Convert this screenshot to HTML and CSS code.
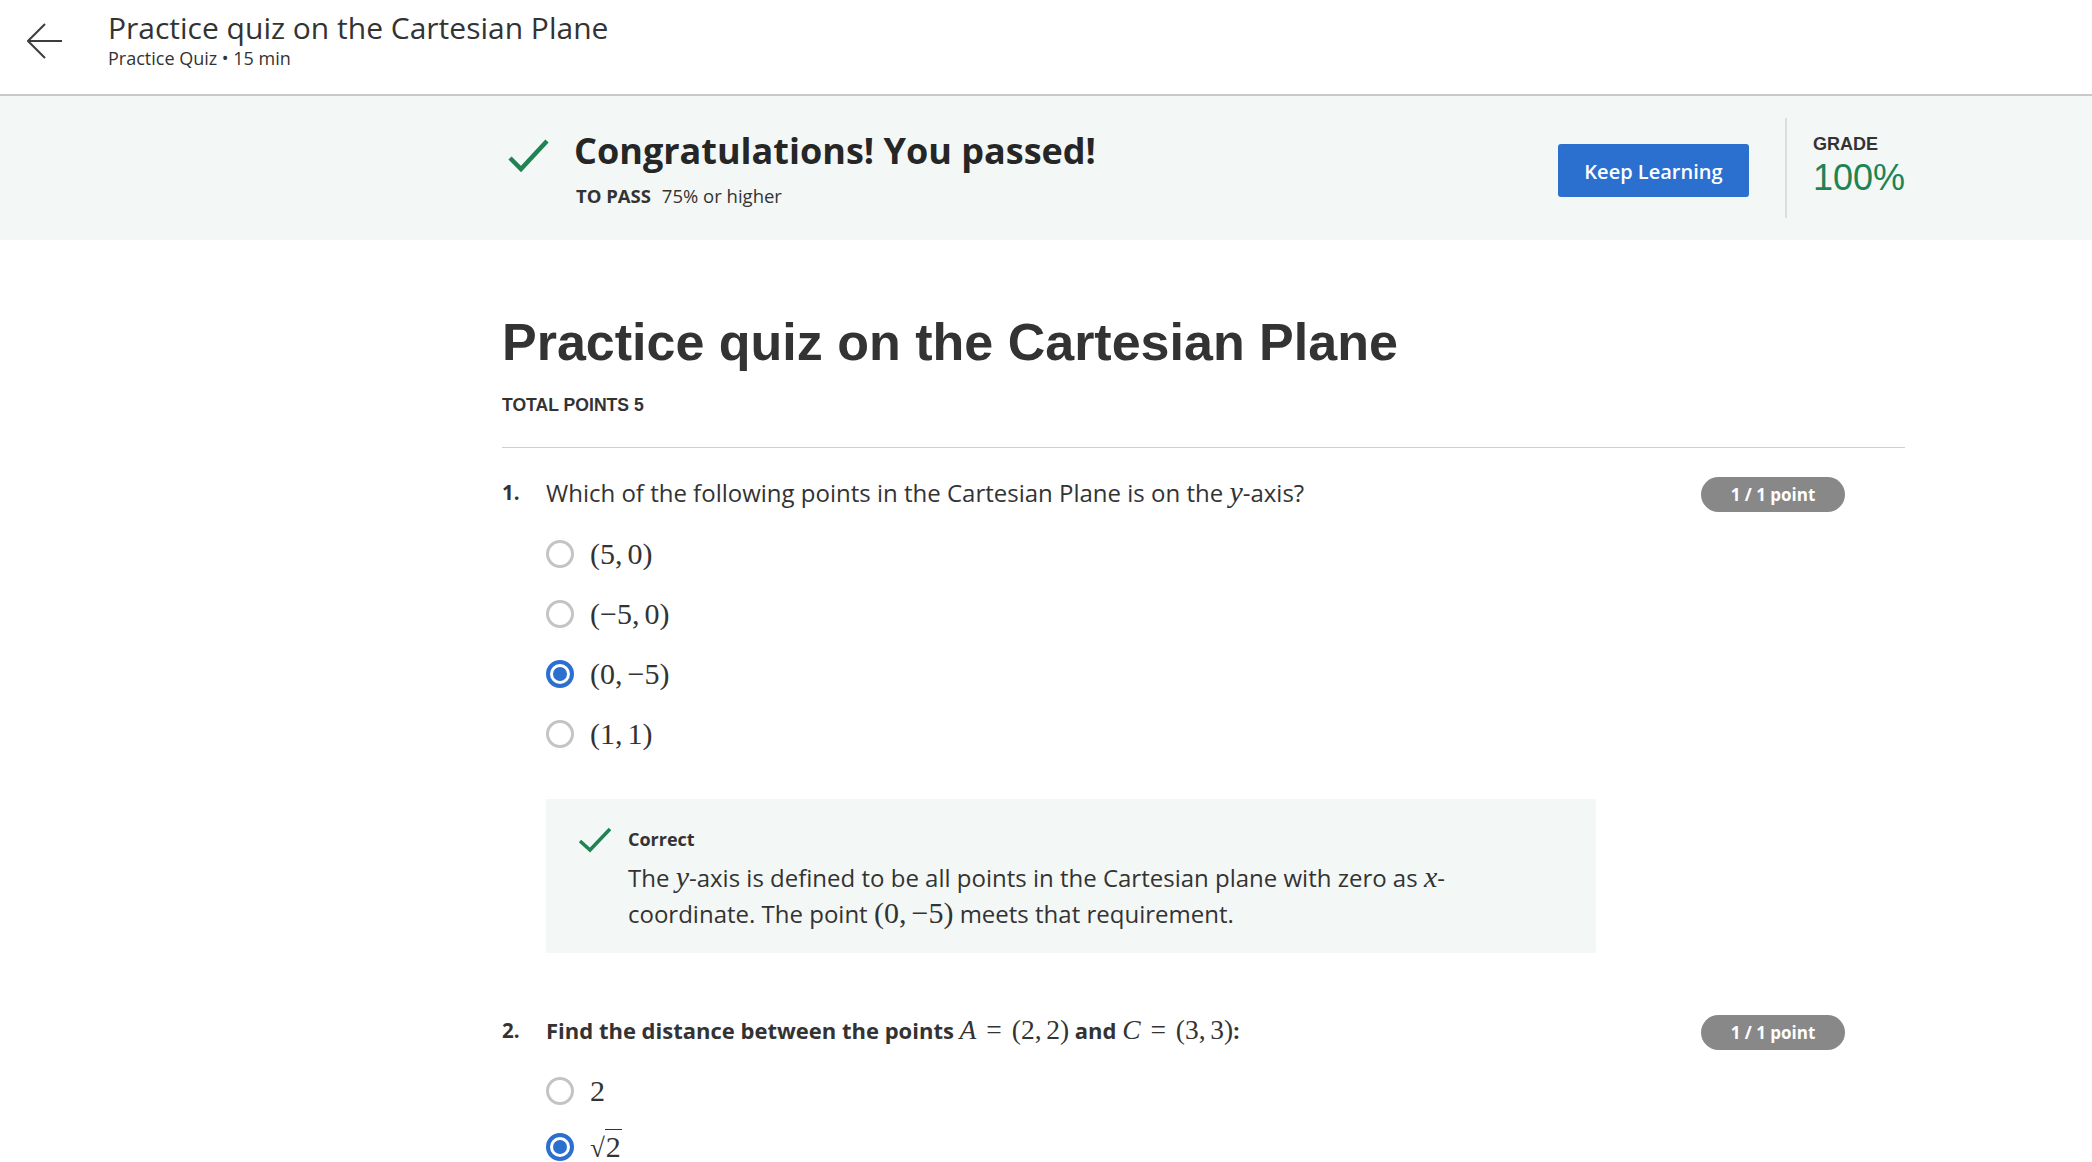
FILE: index.html
```html
<!DOCTYPE html>
<html lang="en">
<head>
<meta charset="utf-8">
<title>Practice quiz on the Cartesian Plane</title>
<link rel="stylesheet" href="styles.css">
</head>
<body>
<header class="topbar">
  <svg class="back" width="36" height="36" viewBox="0 0 36 36" aria-hidden="true">
    <polyline points="18,1 1,18 18,35" fill="none" stroke="#3d3d3d" stroke-width="2"/>
    <line x1="1" y1="18" x2="35" y2="18" stroke="#3d3d3d" stroke-width="2"/>
  </svg>
  <div class="topbar-text">
    <div class="topbar-title">Practice quiz on the Cartesian Plane</div>
    <div class="topbar-sub">Practice Quiz • 15 min</div>
  </div>
</header>

<section class="banner">
  <div class="banner-inner">
    <div class="banner-left">
      <svg class="pass-check" width="44" height="36" viewBox="0 0 44 36" aria-hidden="true">
        <polyline points="4,21 15,32 41,4" fill="none" stroke="#1f8354" stroke-width="4.5"/>
      </svg>
      <div>
        <div class="congrats">Congratulations! You passed!</div>
        <div class="topass"><span class="topass-label">TO PASS</span> 75% or higher</div>
      </div>
    </div>
    <div class="banner-right">
      <button class="keep">Keep Learning</button>
      <div class="vdivider"></div>
      <div class="grade">
        <div class="grade-label">GRADE</div>
        <div class="grade-value">100%</div>
      </div>
    </div>
  </div>
</section>

<main class="content">
  <h1 class="quiz-title">Practice quiz on the Cartesian Plane</h1>
  <div class="total">TOTAL POINTS 5</div>
  <hr class="rule">

  <div class="question">
    <div class="q-head">
      <div class="q-num">1.</div>
      <div class="q-text">Which of the following points in the Cartesian Plane is on the <span class="mi">y</span>-axis?</div>
      <div class="badge">1 / 1 point</div>
    </div>
    <div class="options">
      <div class="option"><span class="radio"></span><span class="m">(5,<span class="thin"></span>0)</span></div>
      <div class="option"><span class="radio"></span><span class="m">(−5,<span class="thin"></span>0)</span></div>
      <div class="option"><span class="radio selected"></span><span class="m">(0,<span class="thin"></span>−5)</span></div>
      <div class="option"><span class="radio"></span><span class="m">(1,<span class="thin"></span>1)</span></div>
    </div>
    <div class="feedback">
      <svg class="fb-check" width="34" height="26" viewBox="0 0 34 26" aria-hidden="true">
        <polyline points="2,14 12,23 32,2" fill="none" stroke="#1f8354" stroke-width="3.5"/>
      </svg>
      <div class="fb-body">
        <div class="fb-title">Correct</div>
        <div class="fb-text">The <span class="mi">y</span>-axis is defined to be all points in the Cartesian plane with zero as <span class="mi">x</span>-<br>coordinate. The point <span class="m">(0,<span class="thin"></span>−5)</span> meets that requirement.</div>
      </div>
    </div>
  </div>

  <div class="question q2">
    <div class="q-head">
      <div class="q-num">2.</div>
      <div class="q-text bold">Find the distance between the points <span class="mi">A</span><span class="m"><span class="rel">=</span>(2,<span class="thin"></span>2)</span> and <span class="mi">C</span><span class="m"><span class="rel">=</span>(3,<span class="thin"></span>3)</span>:</div>
      <div class="badge">1 / 1 point</div>
    </div>
    <div class="options">
      <div class="option"><span class="radio"></span><span class="m">2</span></div>
      <div class="option"><span class="radio selected"></span><span class="m"><span class="sqrt">√</span><span class="rad">2</span></span></div>
    </div>
  </div>
</main>
</body>
</html>
```

FILE: styles.css
```css
* { box-sizing: border-box; }
html, body { margin: 0; padding: 0; }
body {
  font-family: "Open Sans", "Liberation Sans", sans-serif;
  color: #333;
  background: #fff;
}

.topbar {
  height: 96px;
  display: flex;
  align-items: flex-start;
  padding-left: 27px;
  border-bottom: 2px solid #c6c9c8;
}
.back { margin-top: 23px; flex: none; }
.topbar-text { margin-left: 45px; padding-top: 10px; }
.topbar-title { font-size: 30px; line-height: 36px; color: #333; }
.topbar-sub { font-size: 18px; line-height: 24px; margin-top: 0; color: #333; }

.banner { background: #f3f8f6; height: 144px; }
.banner-inner {
  margin-left: 502px;
  width: 1403px;
  height: 144px;
  display: flex;
  justify-content: space-between;
}
.banner-left { display: flex; align-items: flex-start; padding-top: 33px; }
.pass-check { margin-top: 8px; margin-left: 4px; margin-right: 24px; flex: none; }
.congrats { font-size: 36px; line-height: 44px; font-weight: 700; color: #262626; }
.topass { font-size: 18.5px; line-height: 24px; margin-top: 11px; margin-left: 2px; color: #333; }
.topass-label { font-weight: 700; margin-right: 6px; }

.banner-right { display: flex; align-items: center; }
.keep {
  width: 191px;
  height: 53px;
  margin-top: 5px;
  background: #2b6fcf;
  color: #fff;
  border: none;
  border-radius: 3px;
  font-family: "Open Sans", sans-serif;
  font-size: 20px;
  font-weight: 600;
  padding: 0;
  line-height: 55px;
}
.vdivider { width: 2px; height: 100px; background: #dcdedd; margin-left: 36px; margin-right: 26px; }
.grade { padding-bottom: 4px; font-family: "Liberation Sans", Arial, sans-serif; }
.grade-label { font-size: 18px; line-height: 20px; font-weight: 700; color: #333; }
.grade-value { font-size: 36px; line-height: 40px; margin-top: 4px; color: #1f8354; }

.content { margin-left: 502px; width: 1403px; }
.quiz-title {
  margin: 72px 0 0;
  font-family: "Liberation Sans", Arial, sans-serif;
  font-size: 52px;
  line-height: 60px;
  font-weight: 700;
  color: #333;
}
.total {
  margin-top: 22px;
  font-family: "Liberation Sans", Arial, sans-serif;
  font-size: 17.6px;
  line-height: 22px;
  font-weight: 700;
  color: #333;
}
.rule { margin: 31px 0 0; border: none; border-top: 1px solid #cfcfcf; height: 0; }

.question { margin-top: 29px; }
.q2 { margin-top: 62px; }
.q-head { display: flex; align-items: flex-start; }
.q-num { width: 44px; flex: none; font-size: 20.5px; font-weight: 700; line-height: 30px; }
.q-text { flex: 1; font-size: 24px; line-height: 30px; color: #333; }
.q-text.bold { font-weight: 700; font-size: 22px; }
.badge {
  flex: none;
  width: 144px;
  height: 35px;
  margin-right: 60px;
  border-radius: 18px;
  background: #888;
  color: #fff;
  font-size: 17px;
  font-weight: 700;
  display: flex;
  align-items: center;
  justify-content: center;
}

.options { margin-top: 12px; margin-left: 44px; }
.option { height: 60px; display: flex; align-items: center; }
.q2 .options { margin-top: 13px; }
.q2 .option { height: 56px; }
.radio {
  width: 28px;
  height: 28px;
  border-radius: 50%;
  border: 3px solid #c4c4c4;
  margin-right: 16px;
  flex: none;
  display: flex;
  align-items: center;
  justify-content: center;
}
.radio.selected { border: 4px solid #2b6fcf; }
.radio.selected::after {
  content: "";
  width: 14px;
  height: 14px;
  border-radius: 50%;
  background: #2b6fcf;
}

.m { font-family: "Liberation Serif", "Times New Roman", serif; font-size: 30px; font-weight: 400; line-height: 1; }
.q-text .m, .fb-text .m { font-size: 1.25em; }
.thin { display: inline-block; width: 0.17em; }
.rel { display: inline-block; padding: 0 0.36em; }
.mi { font-family: "Liberation Serif", "Times New Roman", serif; font-style: italic; font-size: 1.25em; font-weight: 400; }
.sqrt { font-size: 0.9em; }
.rad { border-top: 1.5px solid #333; padding: 0 1px; }

.feedback {
  margin-top: 35px;
  margin-left: 44px;
  width: 1050px;
  height: 154px;
  background: #f3f8f6;
  display: flex;
  align-items: flex-start;
  padding: 28px 0 0 32px;
}
.fb-check { flex: none; margin-top: 0; margin-right: 16px; }
.fb-title { font-size: 18px; line-height: 24px; font-weight: 700; color: #333; }
.fb-text { margin-top: 8px; font-size: 24px; line-height: 36px; color: #333; white-space: nowrap; }
```
